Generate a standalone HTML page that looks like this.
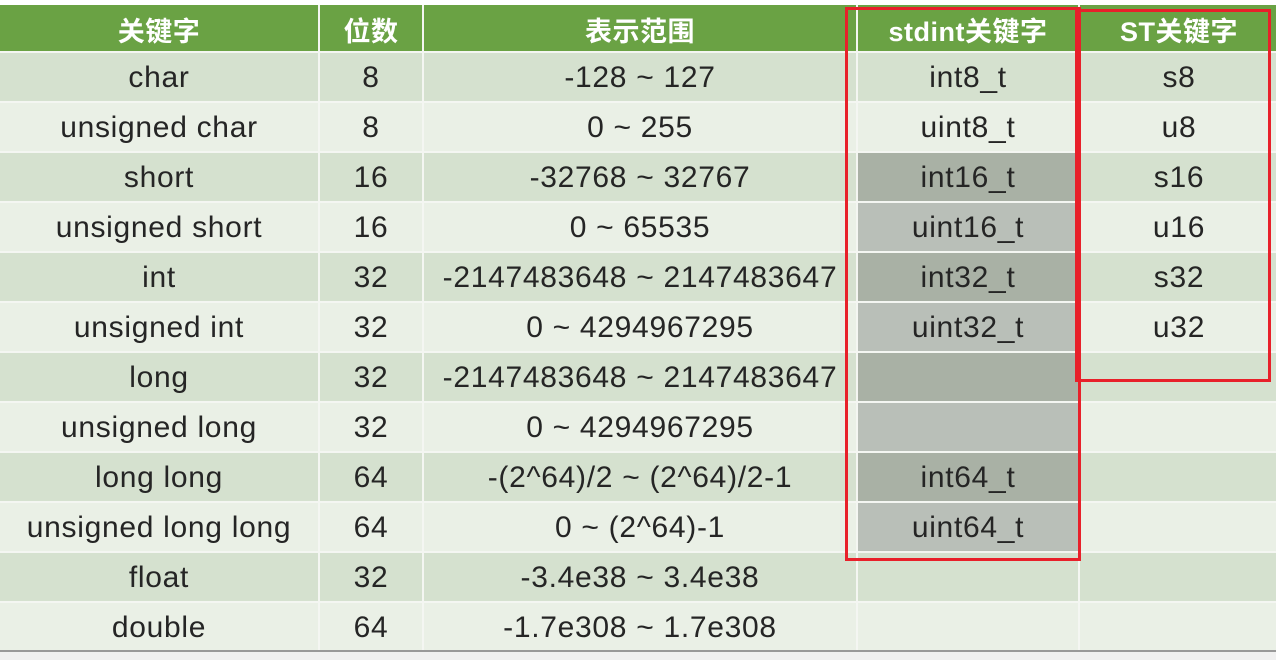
<!DOCTYPE html>
<html><head><meta charset="utf-8"><style>
body{margin:0;width:1276px;height:660px;background:#f0f0f0;position:relative;overflow:hidden;font-family:"Liberation Sans","Noto Sans CJK SC",sans-serif;}
.top{position:absolute;left:0;top:0;width:1276px;height:5px;background:#fff;border-bottom:1px solid #ccc;}
.g{position:absolute;left:0;top:5px;display:grid;grid-template-columns:318px 102px 432px 220px 198px;grid-template-rows:46px repeat(12,48px);gap:2px;background:#f4f6f2;width:1278px;}
.g div{display:flex;align-items:center;justify-content:center;font-size:30px;letter-spacing:0.7px;color:#252525;padding-top:2px;box-sizing:border-box;}
.h{background:#6aa244;color:#fff!important;font-weight:bold;font-size:27px!important;letter-spacing:0.5px!important;}
.o{background:#d5e1cf;}
.e{background:#eaf0e6;}
.go{background:#a9b1a5!important;}
.ge{background:#b9bfb8!important;}
.bl{position:absolute;left:0;top:650px;width:1276px;height:2px;background:#999;}
.r{position:absolute;border:3px solid #e8202a;box-sizing:border-box;}
</style></head><body>
<div class="top"></div>
<div class="g">
<div class="h">关键字</div><div class="h">位数</div><div class="h">表示范围</div><div class="h">stdint关键字</div><div class="h">ST关键字</div>
<div class="o">char</div><div class="o">8</div><div class="o">-128 ~ 127</div><div class="o">int8_t</div><div class="o">s8</div>
<div class="e">unsigned char</div><div class="e">8</div><div class="e">0 ~ 255</div><div class="e">uint8_t</div><div class="e">u8</div>
<div class="o">short</div><div class="o">16</div><div class="o">-32768 ~ 32767</div><div class="o go">int16_t</div><div class="o">s16</div>
<div class="e">unsigned short</div><div class="e">16</div><div class="e">0 ~ 65535</div><div class="e ge">uint16_t</div><div class="e">u16</div>
<div class="o">int</div><div class="o">32</div><div class="o">-2147483648 ~ 2147483647</div><div class="o go">int32_t</div><div class="o">s32</div>
<div class="e">unsigned int</div><div class="e">32</div><div class="e">0 ~ 4294967295</div><div class="e ge">uint32_t</div><div class="e">u32</div>
<div class="o">long</div><div class="o">32</div><div class="o">-2147483648 ~ 2147483647</div><div class="o go"></div><div class="o"></div>
<div class="e">unsigned long</div><div class="e">32</div><div class="e">0 ~ 4294967295</div><div class="e ge"></div><div class="e"></div>
<div class="o">long long</div><div class="o">64</div><div class="o">-(2^64)/2 ~ (2^64)/2-1</div><div class="o go">int64_t</div><div class="o"></div>
<div class="e">unsigned long long</div><div class="e">64</div><div class="e">0 ~ (2^64)-1</div><div class="e ge">uint64_t</div><div class="e"></div>
<div class="o">float</div><div class="o">32</div><div class="o">-3.4e38 ~ 3.4e38</div><div class="o"></div><div class="o"></div>
<div class="e">double</div><div class="e">64</div><div class="e">-1.7e308 ~ 1.7e308</div><div class="e"></div><div class="e"></div>
</div>
<div class="bl"></div>
<div class="r" style="left:845px;top:7px;width:236px;height:554px"></div>
<div class="r" style="left:1075px;top:9px;width:196px;height:373px"></div>
</body></html>
